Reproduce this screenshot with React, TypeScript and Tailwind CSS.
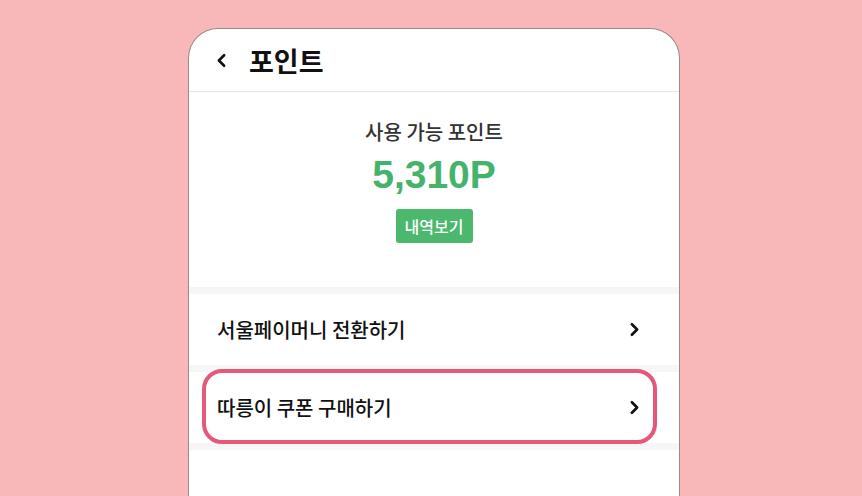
import { ChevronLeft, ChevronRight } from "lucide-react";

const ROWS = [
  { label: "서울페이머니 전환하기", highlight: false },
  { label: "따릉이 쿠폰 구매하기", highlight: true },
];

export default function App() {
  return (
    <div
      className="h-[496px] w-[862px] overflow-hidden bg-[#f8b8b9] pl-[188px] pt-[28px]"
      style={{ fontFamily: '"Noto Sans CJK KR", "Noto Sans", sans-serif' }}
    >
      <div className="h-[480px] w-[492px] rounded-t-[30px] border border-b-0 border-[#9a8b8b] bg-white">
        {/* header */}
        <div className="flex h-[63px] items-center border-b border-[#e6e6e6] pl-[22px]">
          <ChevronLeft size={21} strokeWidth={3} className="text-[#111]" />
          <h1 className="ml-[17px] text-[27px] font-bold leading-none text-[#111]">포인트</h1>
        </div>

        {/* balance */}
        <div className="flex h-[195px] flex-col items-center pt-[26px]">
          <p className="text-[20px] font-medium leading-[28px] text-[#333]">사용 가능 포인트</p>
          <p
            className="mt-[7px] text-[39px] font-bold leading-[44px] text-[#45b36b]"
            style={{ fontFamily: '"Liberation Sans", Arial, sans-serif' }}
          >
            5,310P
          </p>
          <button className="mt-[12px] h-[34px] w-[77px] rounded-[3px] bg-[#4bb86e] text-[16px] font-medium text-white">
            내역보기
          </button>
        </div>

        {/* menu */}
        <div className="h-[7px] bg-[#f6f6f6]" />
        {ROWS.map((row) => (
          <div key={row.label}>
            <div className="relative flex h-[71px] items-center justify-between pl-[28px] pr-[34px]">
              <span className="text-[20px] font-medium text-[#111]">{row.label}</span>
              <ChevronRight size={21} strokeWidth={3} className="text-[#111]" />
              {row.highlight && (
                <div className="pointer-events-none absolute left-[13px] top-[-3px] h-[75px] w-[455px] rounded-[20px] border-[4px] border-[#e5587a]" />
              )}
            </div>
            <div className="h-[7px] bg-[#f6f6f6]" />
          </div>
        ))}
      </div>
    </div>
  );
}
